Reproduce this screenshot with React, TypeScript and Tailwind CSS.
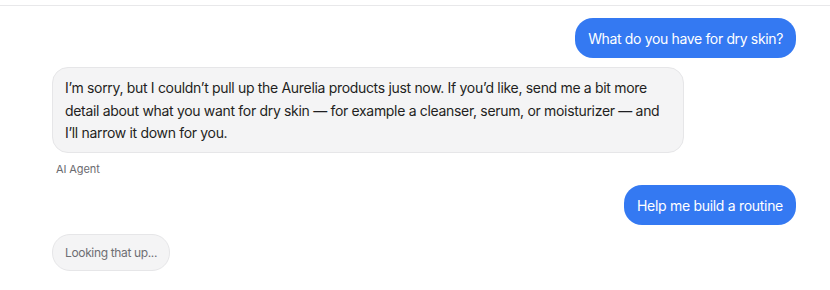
import React from "react";

export default function App() {
  return (
    <div className="w-[830px] h-[290px] bg-white overflow-hidden" style={{ fontFamily: "Inter, 'Noto Sans', sans-serif" }}>
      <div className="h-[5px]" />
      <div className="border-t border-[#e8e8ea]" />
      <div className="flex flex-col pl-[52px] pr-[34px] pt-[12px]">
        <div className="flex justify-end">
          <div className="h-[40px] px-[13px] flex items-center rounded-[18px] bg-[#3479f2] text-white text-[14px] tracking-[-0.35px]">
            What do you have for dry skin?
          </div>
        </div>
        <div className="flex mt-[9px]">
          <div className="w-[632px] h-[86px] rounded-[16px] border border-[#e6e6e8] bg-[#f4f4f5] px-[12px] pt-[9px] text-[14px] leading-[22.5px] text-[#1f1f22] tracking-[-0.32px]">
            I’m sorry, but I couldn’t pull up the Aurelia products just now. If you’d like, send me a bit more
            <br />
            detail about what you want for dry skin — for example a cleanser, serum, or moisturizer — and
            <br />
            I’ll narrow it down for you.
          </div>
        </div>
        <div className="pl-[4px] mt-[9px] text-[11px] leading-[14px] text-[#6b6b70] tracking-[-0.1px]">AI Agent</div>
        <div className="flex justify-end mt-[9px]">
          <div className="h-[40px] px-[13px] flex items-center rounded-[18px] bg-[#3479f2] text-white text-[14px] tracking-[-0.3px]">
            Help me build a routine
          </div>
        </div>
        <div className="flex mt-[9px]">
          <div className="h-[37px] px-[12px] flex items-center rounded-[18px] border border-[#e6e6e8] bg-[#f4f4f5] text-[12px] text-[#6e6e73] tracking-[-0.35px]">
            Looking that up...
          </div>
        </div>
      </div>
    </div>
  );
}
